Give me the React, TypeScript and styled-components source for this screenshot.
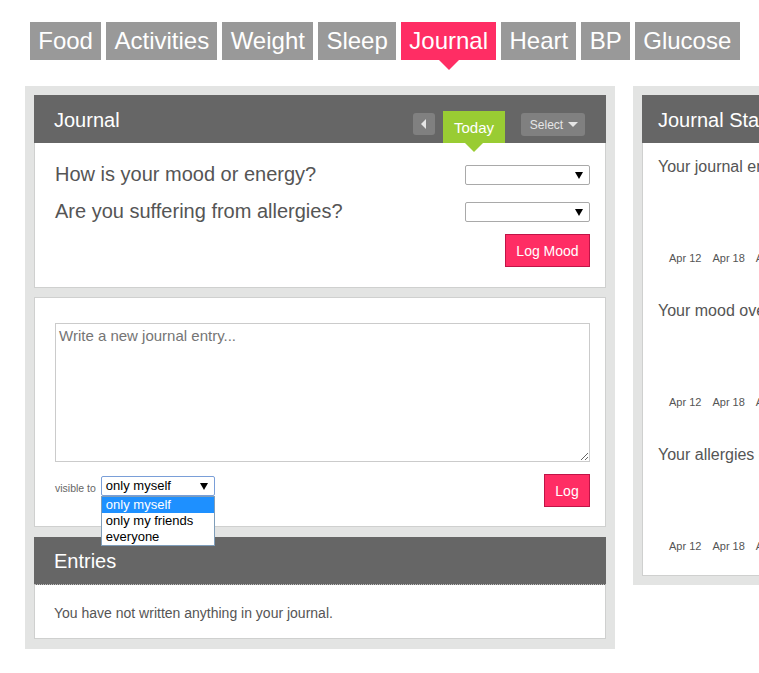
import styled, { createGlobalStyle } from 'styled-components';

const tabs = ['Food', 'Activities', 'Weight', 'Sleep', 'Journal', 'Heart', 'BP', 'Glucose'];

const stats = [
  'Your journal entries over time',
  'Your mood over time',
  'Your allergies over time',
];

const axis = ['Apr 12', 'Apr 18', 'Apr 24', 'Apr 30', 'May 6'];

const App = () => {
  return (
    <Page>
      <GlobalStyle />
      <Tabs>
        {tabs.map((t) => (
          <Tab key={t} $active={t === 'Journal'}>
            {t}
          </Tab>
        ))}
      </Tabs>

      <Columns>
        <LeftWrap>
          <Card>
            <Header>
              <HeaderTitle>Journal</HeaderTitle>
              <HeaderTools>
                <PrevButton aria-label="previous day">
                  <LeftArrow />
                </PrevButton>
                <TodayTab>Today</TodayTab>
                <SelectButton>
                  Select <DownArrow />
                </SelectButton>
              </HeaderTools>
            </Header>
            <MoodBody>
              <QuestionRow>
                <Question>How is your mood or energy?</Question>
                <FakeSelect $width={125} />
              </QuestionRow>
              <QuestionRow>
                <Question>Are you suffering from allergies?</Question>
                <FakeSelect $width={125} />
              </QuestionRow>
              <ButtonRow>
                <PinkButton $w={85} $h={33}>Log Mood</PinkButton>
              </ButtonRow>
            </MoodBody>
          </Card>

          <Card>
            <EntryBody>
              <EntryArea placeholder="Write a new journal entry..." />
              <EntryFooter>
                <Visibility>
                  <VisibleLabel>visible to</VisibleLabel>
                  <DropWrap>
                    <FakeSelect $width={114} $focused>
                      only myself
                    </FakeSelect>
                    <DropList>
                      <DropItem $selected>only myself</DropItem>
                      <DropItem>only my friends</DropItem>
                      <DropItem>everyone</DropItem>
                    </DropList>
                  </DropWrap>
                </Visibility>
                <PinkButton $w={46} $h={33}>Log</PinkButton>
              </EntryFooter>
            </EntryBody>
          </Card>

          <Card $gapTop>
            <Header $dotted>
              <HeaderTitle>Entries</HeaderTitle>
            </Header>
            <EmptyText>You have not written anything in your journal.</EmptyText>
          </Card>
        </LeftWrap>

        <RightWrap>
          <Card>
            <Header $pad={16}>
              <HeaderTitle>Journal Stats</HeaderTitle>
            </Header>
            <StatsBody>
              {stats.map((s) => (
                <StatSection key={s}>
                  <StatTitle>{s}</StatTitle>
                  <Chart />
                  <Axis>
                    {axis.map((a) => (
                      <AxisLabel key={a}>{a}</AxisLabel>
                    ))}
                  </Axis>
                </StatSection>
              ))}
            </StatsBody>
          </Card>
        </RightWrap>
      </Columns>
    </Page>
  );
};

export default App;

const GlobalStyle = createGlobalStyle`
  html, body {
    margin: 0;
    padding: 0;
    background: #fff;
    overflow: hidden;
  }
  body {
    font-family: 'Liberation Sans', Arial, sans-serif;
  }
`;

const Page = styled.div`
  width: 1000px;
  padding: 22px 0 0 25px;
`;

const Tabs = styled.nav`
  display: flex;
  gap: 5px;
  margin-left: 5px;
`;

const Tab = styled.div<{ $active?: boolean }>`
  position: relative;
  height: 38px;
  line-height: 38px;
  padding: 0 8.25px;
  font-size: 24px;
  color: #fff;
  background: ${({ $active }) => ($active ? '#ff2d64' : '#999999')};

  ${({ $active }) =>
    $active &&
    `
    &::after {
      content: '';
      position: absolute;
      left: 50%;
      top: 100%;
      margin-left: -10px;
      border-left: 10px solid transparent;
      border-right: 10px solid transparent;
      border-top: 10px solid #ff2d64;
    }
  `}
`;

const Columns = styled.div`
  display: flex;
  align-items: flex-start;
  gap: 18px;
  margin-top: 26px;
`;

const LeftWrap = styled.div`
  width: 572px;
  flex-shrink: 0;
  background: #e3e4e3;
  padding: 9px 9px 10px;
  display: flex;
  flex-direction: column;
  gap: 9px;
`;

const RightWrap = styled.div`
  width: 320px;
  flex-shrink: 0;
  background: #e3e4e3;
  padding: 9px;
`;

const Card = styled.section<{ $gapTop?: boolean }>`
  background: #fff;
  border: 1px solid #cfd0cf;
  margin-top: ${({ $gapTop }) => ($gapTop ? '1px' : '0')};
`;

const Header = styled.div<{ $dotted?: boolean; $pad?: number }>`
  height: 48px;
  background: #666666;
  margin: -1px -1px 0;
  display: flex;
  align-items: center;
  justify-content: space-between;
  padding: 0 21px 0 ${({ $pad }) => $pad ?? 20}px;
  border-bottom: ${({ $dotted }) => ($dotted ? '1px dotted #bdbdbd' : 'none')};
  box-sizing: border-box;
`;

const HeaderTitle = styled.h2`
  margin: 2px 0 0;
  font-size: 20px;
  font-weight: normal;
  color: #fff;
  white-space: nowrap;
`;

const HeaderTools = styled.div`
  display: flex;
  align-items: flex-end;
  align-self: stretch;
`;

const PrevButton = styled.button`
  width: 22px;
  height: 22px;
  margin: 0 8px 8px 0;
  padding: 0;
  border: none;
  border-radius: 3px;
  background: #808080;
  display: flex;
  align-items: center;
  justify-content: center;
`;

const LeftArrow = styled.span`
  width: 0;
  height: 0;
  border-top: 5px solid transparent;
  border-bottom: 5px solid transparent;
  border-right: 5px solid #e6e6e6;
  margin-left: -1px;
`;

const TodayTab = styled.div`
  position: relative;
  width: 62px;
  height: 32px;
  line-height: 34px;
  text-align: center;
  background: #99cc33;
  color: #fff;
  font-size: 15px;

  &::after {
    content: '';
    position: absolute;
    left: 50%;
    top: 100%;
    margin-left: -9px;
    border-left: 9px solid transparent;
    border-right: 9px solid transparent;
    border-top: 9px solid #99cc33;
  }
`;

const SelectButton = styled.button`
  height: 23px;
  width: 64px;
  margin: 0 0 7px 16px;
  padding: 0 0 0 2px;
  border: none;
  border-radius: 3px;
  background: #808080;
  color: #e6e6e6;
  font-family: 'Liberation Sans', Arial, sans-serif;
  font-size: 12px;
  display: flex;
  align-items: center;
  justify-content: center;
  gap: 5px;
`;

const DownArrow = styled.span`
  width: 0;
  height: 0;
  border-left: 5px solid transparent;
  border-right: 5px solid transparent;
  border-top: 5px solid #e6e6e6;
`;

const MoodBody = styled.div`
  padding: 22px 15px 20px 20px;
  display: flex;
  flex-direction: column;
`;

const QuestionRow = styled.div`
  display: flex;
  align-items: center;
  justify-content: space-between;
  height: 20px;
  margin-bottom: 17px;

  &:nth-of-type(2) {
    margin-bottom: 12px;
  }
`;

const Question = styled.div`
  font-size: 20px;
  color: #555;
  margin-top: -2px;
`;

const FakeSelect = styled.div<{ $width: number; $focused?: boolean }>`
  position: relative;
  width: ${({ $width }) => $width}px;
  height: 20px;
  box-sizing: border-box;
  border: 1px solid ${({ $focused }) => ($focused ? '#7a9fd8' : '#a9a9a9')};
  border-radius: 2px;
  background: #fff;
  font-size: 13px;
  line-height: 18px;
  padding-left: 4px;
  color: #000;

  &::after {
    content: '';
    position: absolute;
    right: 6px;
    top: 6px;
    border-left: 4px solid transparent;
    border-right: 4px solid transparent;
    border-top: 7px solid #000;
  }
`;

const ButtonRow = styled.div`
  display: flex;
  justify-content: flex-end;
`;

const PinkButton = styled.button<{ $w: number; $h: number }>`
  width: ${({ $w }) => $w}px;
  height: ${({ $h }) => $h}px;
  padding: 0;
  background: #ff2d64;
  border: 1px solid #c01447;
  color: #fff;
  font-family: 'Liberation Sans', Arial, sans-serif;
  font-size: 14px;
`;

const EntryBody = styled.div`
  padding: 25px 15px 19px 20px;
`;

const EntryArea = styled.textarea`
  display: block;
  width: 535px;
  height: 139px;
  box-sizing: border-box;
  border: 1px solid #cbcbcb;
  padding: 3px 3px;
  font-family: 'Liberation Sans', Arial, sans-serif;
  font-size: 15px;
  color: #333;
  resize: vertical;
  outline: none;

  &::placeholder {
    color: #757575;
  }
`;

const EntryFooter = styled.div`
  display: flex;
  justify-content: space-between;
  align-items: flex-start;
  margin-top: 12px;
`;

const Visibility = styled.div`
  display: flex;
  align-items: center;
  gap: 5px;
  margin-top: 2px;
`;

const VisibleLabel = styled.span`
  font-size: 10.5px;
  color: #666;
  margin-top: 4px;
`;

const DropWrap = styled.div`
  position: relative;
`;

const DropList = styled.div`
  position: absolute;
  top: 20px;
  left: 0;
  width: 114px;
  box-sizing: border-box;
  border: 1px solid #7f9db9;
  background: #fff;
  z-index: 5;
`;

const DropItem = styled.div<{ $selected?: boolean }>`
  height: 16px;
  line-height: 16px;
  padding-left: 4px;
  font-size: 13px;
  background: ${({ $selected }) => ($selected ? '#1e90ff' : '#fff')};
  color: ${({ $selected }) => ($selected ? '#fff' : '#000')};
`;

const EmptyText = styled.p`
  margin: 0;
  padding: 20px 19px 17px;
  font-size: 14px;
  color: #555;
`;

const StatsBody = styled.div`
  padding: 14px 15px 22px;
`;

const StatSection = styled.div`
  & + & {
    margin-top: 36px;
  }
`;

const StatTitle = styled.div`
  font-size: 16px;
  line-height: 20px;
  color: #555;
  white-space: nowrap;
`;

const Chart = styled.div`
  height: 74px;
`;

const Axis = styled.div`
  display: flex;
  gap: 11px;
  padding-left: 11px;
`;

const AxisLabel = styled.span`
  font-size: 11px;
  line-height: 14px;
  color: #555;
  white-space: nowrap;
`;
